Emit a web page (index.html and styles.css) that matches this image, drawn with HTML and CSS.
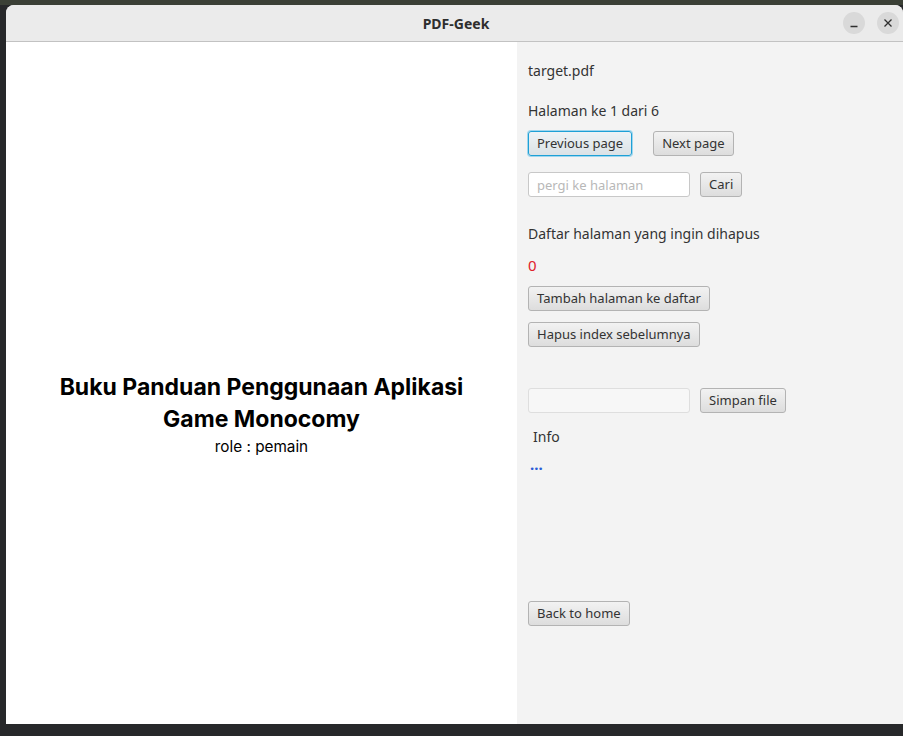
FILE: index.html
```html
<!DOCTYPE html>
<html>
<head>
<meta charset="utf-8">
<link rel="stylesheet" href="styles.css">
</head>
<body>
<div class="desktop">
  <div class="window">
    <div class="titlebar">
      <div class="title">PDF-Geek</div>
      <div class="controls">
        <span class="ctl"><svg width="22" height="22" viewBox="0 0 22 22"><path d="M7.5 14.5h7" stroke="#2e2e2e" stroke-width="1.3"/></svg></span>
        <span class="ctl"><svg width="22" height="22" viewBox="0 0 22 22"><path d="M7.5 7.5l7 7M14.5 7.5l-7 7" stroke="#2e2e2e" stroke-width="1.3"/></svg></span>
      </div>
    </div>
    <div class="content">
      <div class="page">
        <h1 class="doc-title">Buku Panduan Penggunaan Aplikasi<br>Game Monocomy</h1>
        <p class="doc-role">role : pemain</p>
      </div>
      <div class="side">
        <div class="label file-name">target.pdf</div>
        <div class="label page-info">Halaman ke 1 dari 6</div>
        <div class="row nav-row">
          <button class="btn focused">Previous page</button>
          <button class="btn next">Next page</button>
        </div>
        <div class="row search-row">
          <input class="field" type="text" placeholder="pergi ke halaman">
          <button class="btn">Cari</button>
        </div>
        <div class="label list-label">Daftar halaman yang ingin dihapus</div>
        <div class="label count">0</div>
        <div class="row add-row"><button class="btn">Tambah halaman ke daftar</button></div>
        <div class="row del-row"><button class="btn">Hapus index sebelumnya</button></div>
        <div class="row save-row">
          <input class="field disabled" type="text">
          <button class="btn">Simpan file</button>
        </div>
        <div class="label info">Info</div>
        <div class="label dots">...</div>
        <div class="row home-row"><button class="btn">Back to home</button></div>
      </div>
    </div>
  </div>
</div>
</body>
</html>
```

FILE: styles.css
```css
html, body {
  margin: 0;
  padding: 0;
}
body {
  width: 903px;
  height: 736px;
  overflow: hidden;
  background: #27282a;
}
.desktop {
  position: relative;
  width: 903px;
  height: 736px;
  background: linear-gradient(#3b4036 0, #3b4036 5px, #27282a 5px);
}
.window {
  position: absolute;
  left: 6px;
  top: 5px;
  width: 897px;
  height: 719px;
  border-radius: 8px 8px 0 0;
  overflow: hidden;
  display: flex;
  flex-direction: column;
  background: #f3f3f3;
}
.titlebar {
  height: 36px;
  flex: none;
  background: #ebebeb;
  border-bottom: 1px solid #c2c2c2;
  display: flex;
  align-items: center;
  justify-content: center;
  position: relative;
}
.title {
  font-family: "Noto Sans", sans-serif;
  font-weight: bold;
  font-size: 14px;
  color: #2e2e2e;
  margin-left: 3px;
}
.controls {
  position: absolute;
  right: 4px;
  top: 7px;
  display: flex;
  gap: 12px;
}
.ctl {
  width: 22px;
  height: 22px;
  border-radius: 50%;
  background: #d9d9d9;
  display: block;
}
.ctl svg { display: block; }
.content {
  flex: 1;
  display: flex;
}
.page {
  width: 511px;
  flex: none;
  background: #ffffff;
  padding-top: 329px;
  box-sizing: border-box;
  text-align: center;
  font-family: Inter, sans-serif;
  color: #000;
}
.doc-title {
  margin: 0;
  font-size: 23px;
  line-height: 32px;
  font-weight: 700;
}
.doc-role {
  margin: 1px 0 0 0;
  font-size: 15.3px;
  line-height: 22px;
}
.side {
  flex: 1;
  padding: 20px 0 0 11px;
  font-family: "Noto Sans", sans-serif;
  font-size: 14px;
  color: #333333;
  display: flex;
  flex-direction: column;
  align-items: flex-start;
}
.label {
  height: 18px;
  line-height: 18px;
}
.page-info { margin-top: 22px; }
.row {
  display: flex;
  align-items: center;
}
.nav-row { margin-top: 11px; }
.nav-row .next { margin-left: 21px; }
.search-row { margin-top: 16px; }
.search-row .btn, .save-row .btn { margin-left: 10px; }
.list-label { margin-top: 28px; }
.count {
  margin-top: 13px;
  font-size: 15px;
  color: #e0202a;
}
.add-row { margin-top: 12px; }
.del-row { margin-top: 11px; }
.save-row { margin-top: 41px; }
.info {
  margin-top: 15px;
  margin-left: 5px;
  font-size: 14px;
}
.dots {
  margin-top: 9px;
  margin-left: 2px;
  color: #2a5bd7;
  font-weight: bold;
  font-size: 15px;
}
.home-row { margin-top: 128px; }
.btn {
  height: 25px;
  box-sizing: border-box;
  padding: 0 8px;
  font-family: "Noto Sans", sans-serif;
  font-size: 13px;
  color: #333333;
  background: linear-gradient(#f2f2f2, #dddddd);
  border: 1px solid #b3b3b3;
  border-radius: 3px;
  margin: 0;
  line-height: 23px;
}
.btn.focused {
  border-color: #1ea0d6;
  box-shadow: 0 0 0 1px #9fd6ee;
  background: linear-gradient(#eef3f6, #dbe2e6);
}
.field {
  width: 162px;
  height: 25px;
  box-sizing: border-box;
  margin: 0;
  padding: 0 8px;
  font-family: "Noto Sans", sans-serif;
  font-size: 13px;
  color: #333;
  background: #ffffff;
  border: 1px solid #c8c8c8;
  border-radius: 3px;
  outline: none;
}
.field::placeholder { color: #b8b8b8; }
.field.disabled {
  background: #f7f7f7;
  border-color: #dedede;
}
```
